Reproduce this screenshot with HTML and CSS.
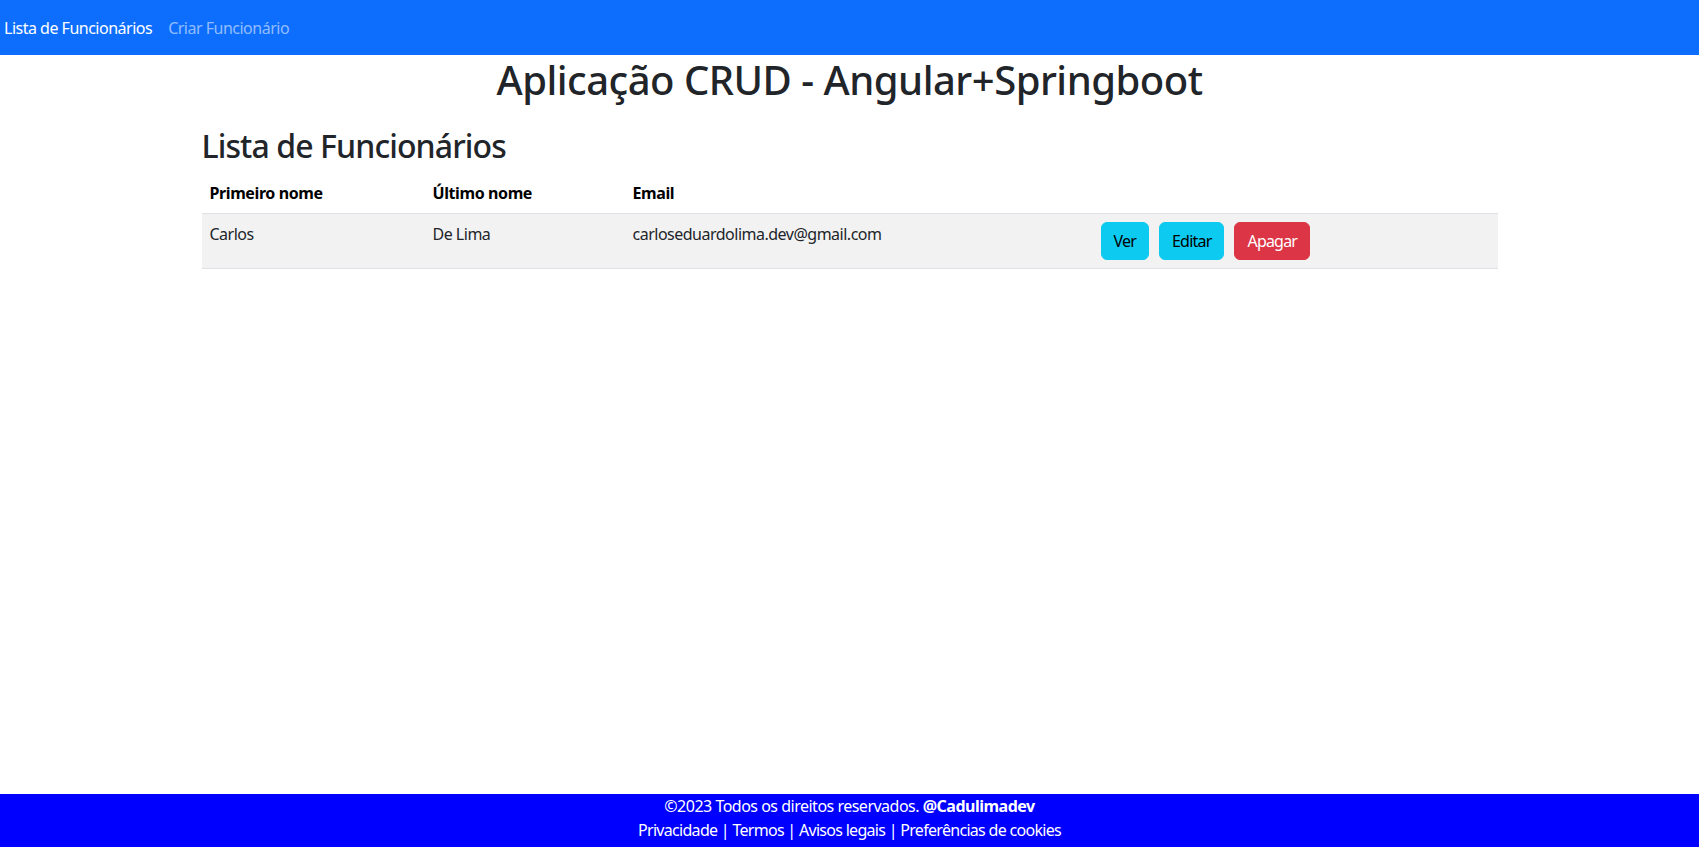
FILE: index.html
```html
<!DOCTYPE html>
<html lang="pt-BR">
<head>
<meta charset="utf-8">
<title>Aplicação CRUD</title>
<link rel="stylesheet" href="styles.css">
</head>
<body>
<nav class="navbar">
  <a class="nav-link active" href="#">Lista de Funcionários</a>
  <a class="nav-link" href="#">Criar Funcionário</a>
</nav>
<main class="page">
  <h1 class="title">Aplicação CRUD - Angular+Springboot</h1>
  <div class="container">
    <h2 class="subtitle">Lista de Funcionários</h2>
    <table class="table">
      <thead>
        <tr>
          <th class="col-first">Primeiro nome</th>
          <th class="col-last">Último nome</th>
          <th class="col-email">Email</th>
          <th class="col-actions"></th>
        </tr>
      </thead>
      <tbody>
        <tr>
          <td>Carlos</td>
          <td>De Lima</td>
          <td>carloseduardolima.dev@gmail.com</td>
          <td>
            <div class="actions">
              <button class="btn btn-info">Ver</button>
              <button class="btn btn-info">Editar</button>
              <button class="btn btn-danger">Apagar</button>
            </div>
          </td>
        </tr>
      </tbody>
    </table>
  </div>
</main>
<footer class="footer">
  <div>©2023 Todos os direitos reservados. <strong>@Cadulimadev</strong></div>
  <div class="footer-links">Privacidade | Termos | Avisos legais | Preferências de cookies</div>
</footer>
</body>
</html>
```
FILE: styles.css
```css
* { box-sizing: border-box; }

html, body { height: 100%; }

body {
  margin: 0;
  font-family: "Noto Sans", "Open Sans", sans-serif;
  font-size: 16px;
  line-height: 1.5;
  color: #212529;
  letter-spacing: -0.5px;
  display: flex;
  flex-direction: column;
  min-height: 100vh;
}

.navbar {
  background: #0d6efd;
  height: 55px;
  padding: 16px 0 0 4px;
  display: flex;
  gap: 16px;
  flex-shrink: 0;
}

.nav-link {
  color: rgba(255, 255, 255, 0.55);
  text-decoration: none;
  line-height: 24px;
}

.nav-link.active { color: #fff; }

.page { flex: 1; }

.title {
  margin: 1px 0 8px;
  text-align: center;
  font-size: 40px;
  font-weight: 500;
  line-height: 1.2;
  letter-spacing: -0.5px;
}

.container {
  width: 1320px;
  margin: 0 auto;
  padding: 0 12px;
}

.subtitle {
  margin: 23px 0 8px;
  font-size: 32px;
  font-weight: 500;
  line-height: 1.2;
  letter-spacing: -0.9px;
}

.table {
  width: 100%;
  border-collapse: collapse;
  margin-bottom: 16px;
  vertical-align: top;
}

.table th,
.table td {
  padding: 8px;
  text-align: left;
  vertical-align: top;
  border-bottom: 1px solid #dee2e6;
}

.table th {
  font-weight: 700;
  letter-spacing: -0.4px;
  color: #000;
}

.table tbody tr { background: #f2f2f2; }

.col-first { width: 223px; }
.col-last { width: 200px; }
.col-email { width: 468px; }

.actions {
  display: flex;
  gap: 10px;
}

.btn {
  font-family: inherit;
  font-size: 16px;
  line-height: 24px;
  letter-spacing: -0.8px;
  padding: 6px 12px;
  border: 1px solid transparent;
  border-radius: 6px;
  cursor: pointer;
}

.btn-info { background: #0dcaf0; border-color: #0dcaf0; color: #000; }
.btn-danger { background: #dc3545; border-color: #dc3545; color: #fff; }

.footer {
  background: #0000ff;
  color: #fff;
  text-align: center;
  height: 53px;
  line-height: 24px;
  flex-shrink: 0;
}

.footer-links { letter-spacing: -0.7px; }
```
